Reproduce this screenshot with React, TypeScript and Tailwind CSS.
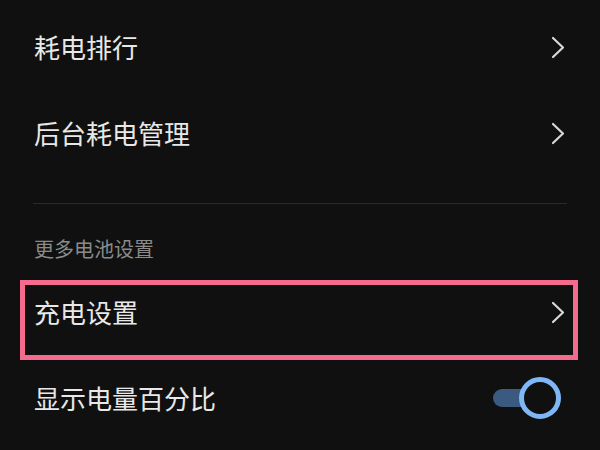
import React from "react";

function Chevron() {
  return (
    <svg width="14" height="23" viewBox="0 0 14 23" className="shrink-0">
      <polyline points="2,2 12,11.5 2,21" fill="none" stroke="#d8d8d8" strokeWidth="2.2" strokeLinecap="round" strokeLinejoin="round" />
    </svg>
  );
}

function Row({ label, children }: { label: string; children?: React.ReactNode }) {
  return (
    <div className="relative flex h-[86px] items-center justify-between pl-[34px] pr-[35px]">
      <span className="text-[26px] leading-none text-[#e8e8e8]">{label}</span>
      {children ?? <Chevron />}
    </div>
  );
}

export default function App() {
  return (
    <div
      className="h-[450px] w-[600px] overflow-hidden bg-[#101010] pt-[4px]"
      style={{ fontFamily: '"Noto Sans CJK SC", "Noto Sans", sans-serif' }}
    >
      <Row label="耗电排行" />
      <Row label="后台耗电管理" />
      <div className="mx-[33px] mt-[27px] h-px bg-[#2a2a2a]" />
      <div className="flex h-[65px] items-end pb-[10px] pl-[34px]">
        <span className="text-[20px] leading-none text-[#8a8a8a]">更多电池设置</span>
      </div>
      <div className="relative">
        <Row label="充电设置" />
        <div className="pointer-events-none absolute left-[20px] top-[11px] h-[80px] w-[558px] border-[5px] border-[#f56b90]" />
      </div>
      <Row label="显示电量百分比">
        <div className="relative mr-[4px] flex h-[42px] w-[68px] items-center">
          <div className="absolute left-0 top-[12px] h-[18px] w-[50px] rounded-full bg-[#3b5a80]" />
          <div className="absolute right-0 top-0 h-[42px] w-[42px] rounded-full border-[5px] border-[#7fb6f6] bg-[#101010]" />
        </div>
      </Row>
    </div>
  );
}
